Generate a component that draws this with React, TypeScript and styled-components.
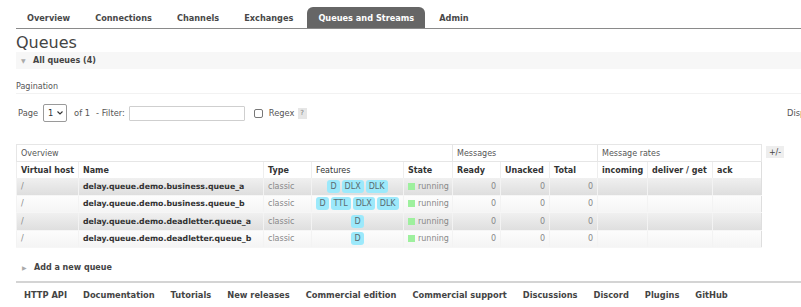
import styled, { createGlobalStyle } from 'styled-components'

const GlobalStyle = createGlobalStyle`
  html, body {
    margin: 0;
    padding: 0;
    background: #fff;
    overflow: hidden;
  }
  body {
    font-family: 'DejaVu Sans', Verdana, sans-serif;
    font-size: 8px;
    color: #484848;
  }
`

const Page = styled.div`
  width: 1000px;
  padding: 7px 0 0 16px;
`

const Tabs = styled.ul`
  display: flex;
  margin: 0;
  padding: 0;
  list-style: none;
  height: 21px;
  border-bottom: 1px solid #8a8a8a;
`

const Tab = styled.li<{ $active?: boolean }>`
  display: flex;
  align-items: center;
  padding: 0 11px;
  margin-right: 3px;
  font-size: 8.2px;
  font-weight: bold;
  color: ${({ $active }) => ($active ? '#fff' : '#484848')};
  background: ${({ $active }) => ($active ? '#666' : 'transparent')};
  border-radius: 6px 6px 0 0;
`

const Title = styled.h1`
  margin: 5px 0 0;
  font-size: 16px;
  line-height: 18px;
  font-weight: normal;
  color: #444;
`

const SectionBar = styled.div`
  display: flex;
  align-items: center;
  gap: 6px;
  height: 17px;
  padding-left: 5px;
  background: #f7f7f7;
  font-weight: bold;
  color: #444;
`

const Arrow = styled.span`
  color: #aaa;
  font-size: 6px;
  width: 6px;
`

const SubHeading = styled.div`
  margin-top: 12px;
  line-height: 12px;
  color: #555;
  border-bottom: 1px solid #f2f2f2;
`

const PagerRow = styled.div`
  display: flex;
  align-items: center;
  height: 18px;
  margin-top: 10px;
  padding-left: 2px;
  font-size: 8.3px;
  color: #555;
`

const PagerLeft = styled.div`
  display: flex;
  align-items: center;
  flex: 0 0 769px;
`

const Label = styled.span<{ $gap?: number }>`
  margin-left: ${({ $gap }) => $gap ?? 0}px;
`

const FakeSelect = styled.div`
  display: flex;
  align-items: center;
  justify-content: space-between;
  box-sizing: border-box;
  width: 24px;
  height: 18px;
  margin-left: 5px;
  padding: 0 3px 0 4px;
  border: 1px solid #9a9a9a;
  border-radius: 2px;
  color: #333;
`

const FilterInput = styled.input`
  box-sizing: border-box;
  width: 116px;
  height: 15px;
  margin: 0 0 0 4px;
  border: 1px solid #cfcfcf;
  border-radius: 1px;
  font: inherit;
`

const Check = styled.span`
  box-sizing: border-box;
  width: 9px;
  height: 9px;
  margin-left: 9px;
  border: 1px solid #777;
  border-radius: 2px;
`

const Help = styled.span`
  display: inline-flex;
  align-items: center;
  justify-content: center;
  width: 9px;
  height: 11px;
  margin-left: 3px;
  background: #e6e6e6;
  color: #777;
  font-size: 7px;
`

const TableWrap = styled.div`
  display: flex;
  align-items: flex-start;
  gap: 4px;
  margin-top: 22px;
`

const Grid = styled.table`
  width: 745px;
  table-layout: fixed;
  border-collapse: collapse;
  border: 1px solid #dedede;
`

const GroupCell = styled.th`
  height: 16px;
  padding: 0 4px;
  text-align: left;
  font-weight: normal;
  color: #555;
  border: 1px solid #e6e6e6;
  white-space: nowrap;
`

const HeadCell = styled.th<{ $light?: boolean }>`
  height: 16px;
  padding: 0 4px;
  text-align: left;
  font-weight: ${({ $light }) => ($light ? 'normal' : 'bold')};
  color: #333;
  border-left: 1px solid #eee;
  white-space: nowrap;
`

const Row = styled.tr<{ $alt: boolean }>`
  background: ${({ $alt }) =>
    $alt ? 'linear-gradient(#f0f0f0, #dedede)' : 'linear-gradient(#fdfdfd, #f4f4f4)'};
`

const Cell = styled.td<{ $align?: 'left' | 'right' | 'center'; $bold?: boolean }>`
  height: 16.5px;
  padding: 0 4px;
  text-align: ${({ $align }) => $align ?? 'left'};
  font-size: ${({ $bold }) => ($bold ? '7.8px' : '8px')};
  font-weight: ${({ $bold }) => ($bold ? 'bold' : 'normal')};
  color: ${({ $bold }) => ($bold ? '#333' : '#888')};
  border-left: 1px solid #f3f3f3;
  border-bottom: 1px solid #f6f6f6;
  white-space: nowrap;
  overflow: hidden;
`

const Badges = styled.div`
  display: flex;
  justify-content: center;
  gap: 2px;
`

const Badge = styled.span`
  display: inline-block;
  padding: 0 3px;
  line-height: 13px;
  border-radius: 3px;
  background: #9ce9fb;
  color: #5a6a70;
`

const StateBox = styled.span`
  display: inline-block;
  width: 7px;
  height: 7px;
  margin-right: 3px;
  background: #9ef09e;
  vertical-align: -1px;
`

const ToggleBtn = styled.span`
  display: inline-flex;
  align-items: center;
  justify-content: center;
  width: 18px;
  height: 12px;
  margin-top: 2px;
  background: #eee;
  color: #444;
`

const AddBar = styled.div`
  display: flex;
  align-items: center;
  gap: 6px;
  height: 17px;
  margin-top: 11px;
  padding-left: 6px;
  font-weight: bold;
  color: #444;
`

const Footer = styled.div`
  display: flex;
  gap: 16px;
  margin-top: 5px;
  padding: 7px 0 0 8px;
  border-top: 2px solid #d4d4d4;
  font-size: 8.3px;
  font-weight: bold;
  color: #444;
`

const cols = [62, 185, 48, 92, 49, 48, 49, 48, 50, 65, 49]

type Queue = { name: string; features: string[] }

const queues: Queue[] = [
  { name: 'delay.queue.demo.business.queue_a', features: ['D', 'DLX', 'DLK'] },
  { name: 'delay.queue.demo.business.queue_b', features: ['D', 'TTL', 'DLX', 'DLK'] },
  { name: 'delay.queue.demo.deadletter.queue_a', features: ['D'] },
  { name: 'delay.queue.demo.deadletter.queue_b', features: ['D'] },
]

const tabs = ['Overview', 'Connections', 'Channels', 'Exchanges', 'Queues and Streams', 'Admin']

const links = [
  'HTTP API',
  'Documentation',
  'Tutorials',
  'New releases',
  'Commercial edition',
  'Commercial support',
  'Discussions',
  'Discord',
  'Plugins',
  'GitHub',
]

export default function App() {
  return (
    <>
      <GlobalStyle />
      <Page>
        <Tabs>
          {tabs.map((t) => (
            <Tab key={t} $active={t === 'Queues and Streams'}>
              {t}
            </Tab>
          ))}
        </Tabs>

        <Title>Queues</Title>
        <SectionBar>
          <Arrow>▼</Arrow>
          All queues (4)
        </SectionBar>

        <SubHeading>Pagination</SubHeading>
        <PagerRow>
          <PagerLeft>
            <span>Page</span>
            <FakeSelect>
              1
              <svg width="6" height="4" viewBox="0 0 6 4">
                <path d="M0.5 0.5 L3 3 L5.5 0.5" fill="none" stroke="#333" strokeWidth="1.1" />
              </svg>
            </FakeSelect>
            <Label $gap={7}>of 1</Label>
            <Label $gap={6}>- Filter:</Label>
            <FilterInput />
            <Check />
            <Label $gap={6}>Regex</Label>
            <Help>?</Help>
          </PagerLeft>
          <span>Displaying 4 items , page size up to:</span>
        </PagerRow>

        <TableWrap>
          <Grid>
            <colgroup>
              {cols.map((w, i) => (
                <col key={i} style={{ width: w }} />
              ))}
            </colgroup>
            <thead>
              <tr>
                <GroupCell colSpan={5}>Overview</GroupCell>
                <GroupCell colSpan={3}>Messages</GroupCell>
                <GroupCell colSpan={3}>Message rates</GroupCell>
              </tr>
              <tr>
                <HeadCell>Virtual host</HeadCell>
                <HeadCell>Name</HeadCell>
                <HeadCell>Type</HeadCell>
                <HeadCell $light>Features</HeadCell>
                <HeadCell>State</HeadCell>
                <HeadCell>Ready</HeadCell>
                <HeadCell>Unacked</HeadCell>
                <HeadCell>Total</HeadCell>
                <HeadCell>incoming</HeadCell>
                <HeadCell>deliver / get</HeadCell>
                <HeadCell>ack</HeadCell>
              </tr>
            </thead>
            <tbody>
              {queues.map((q, i) => (
                <Row key={q.name} $alt={i % 2 === 0}>
                  <Cell>/</Cell>
                  <Cell $bold>{q.name}</Cell>
                  <Cell>classic</Cell>
                  <Cell>
                    <Badges>
                      {q.features.map((f) => (
                        <Badge key={f}>{f}</Badge>
                      ))}
                    </Badges>
                  </Cell>
                  <Cell>
                    <StateBox />
                    running
                  </Cell>
                  <Cell $align="right">0</Cell>
                  <Cell $align="right">0</Cell>
                  <Cell $align="right">0</Cell>
                  <Cell />
                  <Cell />
                  <Cell />
                </Row>
              ))}
            </tbody>
          </Grid>
          <ToggleBtn>+/-</ToggleBtn>
        </TableWrap>

        <AddBar>
          <Arrow>▶</Arrow>
          Add a new queue
        </AddBar>

        <Footer>
          {links.map((l) => (
            <span key={l}>{l}</span>
          ))}
        </Footer>
      </Page>
    </>
  )
}
